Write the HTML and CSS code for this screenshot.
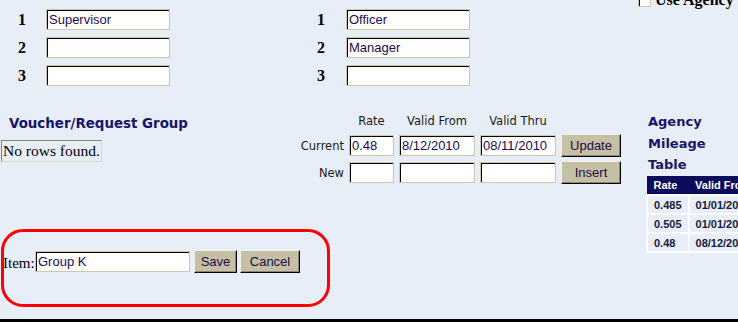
FILE: index.html
```html
<!DOCTYPE html>
<html>
<head>
<meta charset="utf-8">
<link rel="stylesheet" href="styles.css">
</head>
<body>
<div class="page">
  <div class="main">
    <div class="titles">
      <div class="group g1">
        <span class="num">1</span><input class="field" value="Supervisor">
        <span class="num">2</span><input class="field" value="">
        <span class="num">3</span><input class="field" value="">
      </div>
      <div class="group g2">
        <span class="num">1</span><input class="field" value="Officer">
        <span class="num">2</span><input class="field" value="Manager">
        <span class="num">3</span><input class="field" value="">
      </div>
    </div>
    <div class="mid">
      <div class="voucher">
        <h2 class="heading">Voucher/Request Group</h2>
        <div class="empty">No rows found.</div>
      </div>
      <div class="rates">
        <span></span><span class="hdr">Rate</span><span class="hdr">Valid From</span><span class="hdr">Valid Thru</span><span></span>
        <span class="lbl">Current</span>
        <input class="field f-rate" value="0.48">
        <input class="field f-date" value="8/12/2010">
        <input class="field f-date" value="08/11/2010">
        <button class="btn b-wide">Update</button>
        <span class="lbl">New</span>
        <input class="field f-rate" value="">
        <input class="field f-date" value="">
        <input class="field f-date" value="">
        <button class="btn b-wide">Insert</button>
      </div>
    </div>
    <div class="item-row">
      <span class="item-lbl">Item:</span>
      <input class="field f-item" value="Group K">
      <button class="btn b-save">Save</button>
      <button class="btn b-cancel">Cancel</button>
    </div>
    <div class="highlight"></div>
  </div>
  <aside class="side">
    <div class="use"><span class="check"></span><span>Use Agency</span></div>
    <h2 class="heading side-heading">Agency Mileage Table</h2>
    <table class="mileage">
      <tr><th>Rate</th><th>Valid From</th></tr>
      <tr><td>0.485</td><td>01/01/2006</td></tr>
      <tr><td>0.505</td><td>01/01/2008</td></tr>
      <tr><td>0.48</td><td>08/12/2010</td></tr>
    </table>
  </aside>
</div>
<div class="bar"></div>
</body>
</html>
```
FILE: styles.css
```css
html, body {
  margin: 0;
  padding: 0;
  background: #e7eef8;
  overflow: hidden;
  width: 738px;
  height: 322px;
}
.page {
  display: flex;
  height: 319px;
  overflow: hidden;
}
.main {
  position: relative;
  width: 638px;
  flex: none;
}
.titles {
  display: flex;
  padding-top: 9px;
}
.group {
  display: grid;
  grid-template-rows: 21px 21px 21px;
  row-gap: 7px;
  align-items: center;
}
.g1 {
  margin-left: 18px;
  grid-template-columns: 28px 124px;
}
.g2 {
  margin-left: 147px;
  grid-template-columns: 29px 124px;
}
.num {
  font: bold 16px "Liberation Serif", serif;
  color: #000;
  line-height: 18px;
}
.field {
  box-sizing: border-box;
  height: 21px;
  width: 124px;
  margin: 0;
  padding: 0 2px;
  border: 1px solid #cdc7ae;
  box-shadow: inset 1px 1px 0 #000;
  background: #fff;
  font: 13px "Liberation Sans", Arial, sans-serif;
  color: #1a0c50;
  outline: none;
}
.mid {
  display: flex;
  margin-top: 27px;
}
.voucher {
  width: 300px;
  padding-top: 3px;
}
.heading {
  margin: 0;
  font: bold 13px "DejaVu Sans", Verdana, sans-serif;
  color: #18146a;
  line-height: 16px;
}
.voucher .heading {
  padding-left: 9px;
  font-size: 13.4px;
}
.empty {
  display: inline-block;
  margin-top: 8px;
  margin-left: 1px;
  padding: 0 1px;
  border: 1px solid;
  border-color: #8a8662 #dcd8c6 #dcd8c6 #8a8662;
  font: 15.5px "Liberation Serif", serif;
  line-height: 20px;
  color: #000;
}
.rates {
  display: grid;
  grid-template-columns: 44px 45px 76px 76px 60px;
  grid-template-rows: 17px 23px 23px;
  column-gap: 5px;
  row-gap: 4px;
  align-items: center;
}
.hdr {
  align-self: start;
  padding-top: 1px;
  text-align: center;
  font: 11.5px "DejaVu Sans", Verdana, sans-serif;
  color: #1a1a1a;
  white-space: nowrap;
  line-height: 14px;
}
.lbl {
  text-align: right;
  font: 11.5px "DejaVu Sans", Verdana, sans-serif;
  color: #1a1a1a;
}
.f-rate, .f-date {
  width: 100%;
}
.btn {
  box-sizing: border-box;
  height: 23px;
  margin: 0;
  padding: 0;
  background: #c5bfa5;
  border: 1px solid;
  border-color: #f3f0e4 #000 #000 #f3f0e4;
  box-shadow: inset -1px -1px 0 #8c876f;
  font: 13px "Liberation Sans", Arial, sans-serif;
  color: #1a0c40;
}
.b-wide {
  width: 60px;
}
.item-row {
  display: flex;
  align-items: center;
  height: 23px;
  margin-top: 66px;
}
.item-lbl {
  margin-left: 3px;
  width: 32px;
  padding-top: 3px;
  font: 15px "Liberation Serif", serif;
  color: #000;
}
.f-item {
  width: 155px;
}
.b-save {
  width: 43px;
  margin-left: 4px;
}
.b-cancel {
  width: 60px;
  margin-left: 3px;
}
.highlight {
  position: absolute;
  left: 1px;
  top: 229px;
  width: 329px;
  height: 78px;
  box-sizing: border-box;
  border: 3px solid #ff0000;
  border-radius: 22px;
  pointer-events: none;
}
.side {
  width: 100px;
  flex: none;
}
.use {
  display: flex;
  align-items: center;
  height: 16px;
  margin-top: -8px;
  font: bold 16px "Liberation Serif", serif;
  color: #000;
  white-space: nowrap;
}
.check {
  box-sizing: border-box;
  width: 13px;
  height: 13px;
  margin-right: 4px;
  background: #fff;
  border: 1px solid #cdc7ae;
  box-shadow: inset 1px 1px 0 #000;
}
.side-heading {
  width: 80px;
  margin-top: 103px;
  padding-left: 10px;
  line-height: 21.5px;
}
.mileage {
  margin-left: 8px;
  border-collapse: collapse;
  white-space: nowrap;
  font: bold 11px "Liberation Sans", Arial, sans-serif;
}
.mileage th {
  background: #0c0c5c;
  color: #fff;
  text-align: left;
  padding: 2px 6px 2px 6px;
  border: 1px solid #0c0c5c;
  line-height: 13px;
}
.mileage td {
  color: #1a1a3a;
  padding: 3px 6px 1px 6px;
  border: 2px solid #fff;
  line-height: 13px;
}
.mileage td:first-child, .mileage th:first-child {
  width: 39px;
}
.bar {
  height: 3px;
  background: #000;
}
```
